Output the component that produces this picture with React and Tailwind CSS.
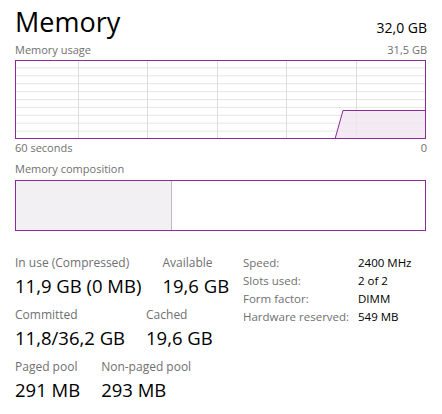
import React from 'react';

const font = { fontFamily: '"Open Sans", "Noto Sans", sans-serif' };

/* ─── Usage chart ─────────────────────────────────────────── */
const UsageChart = () => {
  const w = 411;
  const h = 79;
  const cols = [63, 132, 202, 271, 341];
  const rows = Array.from({ length: 9 }, (_, i) => ((i + 1) * h) / 10);
  return (
    <svg width={w} height={h} className="block">
      <rect x="0" y="0" width={w} height={h} fill="#ffffff" />
      {rows.map((y) => (
        <line key={y} x1="0" x2={w} y1={y} y2={y} stroke="#e6e6e6" strokeWidth="1" />
      ))}
      {cols.map((x) => (
        <line key={x} x1={x + 0.5} x2={x + 0.5} y1="0" y2={h} stroke="#dcdcdc" strokeWidth="1" />
      ))}
      <polygon points={`320,${h} 328,50 ${w},50 ${w},${h}`} fill="#f1e6f2" fillOpacity="0.85" />
      <polyline points={`320,${h} 328,50.5 ${w},50.5`} fill="none" stroke="#8b2a99" strokeWidth="1" />
      <rect x="0.5" y="0.5" width={w - 1} height={h - 1} fill="none" stroke="#8b2a99" strokeWidth="1" />
    </svg>
  );
};

const Stat = ({ label, value }) => (
  <div className="flex flex-col">
    <span className="text-[12px] leading-[16px] text-[#707070]">{label}</span>
    <span className="text-[18.5px] leading-[29px] text-black">{value}</span>
  </div>
);

const Spec = ({ label, value }) => (
  <div className="flex h-[18px] items-center text-[11.5px]">
    <span className="w-[115px] text-[#707070]">{label}</span>
    <span className="text-black">{value}</span>
  </div>
);

export default function App() {
  return (
    <div className="w-[442px] h-[414px] bg-white px-[15px] pt-[3px] overflow-hidden" style={font}>
      {/* Header */}
      <div className="flex items-end justify-between">
        <h1 className="text-[27px] leading-[38px] font-normal text-black">Memory</h1>
        <span className="text-[14px] leading-[20px] mb-[3px] text-black">32,0 GB</span>
      </div>
      <div className="flex justify-between text-[11px] leading-[16px] text-[#707070] mt-[1px]">
        <span>Memory usage</span>
        <span>31,5 GB</span>
      </div>

      <div className="mt-[2px]">
        <UsageChart />
      </div>

      <div className="flex justify-between text-[11px] leading-[16px] text-[#707070] mt-[1px]">
        <span>60 seconds</span>
        <span>0</span>
      </div>

      <div className="mt-[5px] text-[11px] leading-[16px] text-[#707070]">Memory composition</div>
      <div className="mt-[3px] flex h-[51px] w-[411px] border border-[#8b2a99]">
        <div className="w-[156px] bg-[#f3f0f4] border-r border-[#bdbdbd]" />
        <div className="flex-1 bg-white" />
      </div>

      {/* Stats */}
      <div className="mt-[24px] flex">
        <div className="flex flex-col w-[228px] gap-[7px]">
          <div className="flex gap-[21px]">
            <Stat label="In use (Compressed)" value="11,9 GB (0 MB)" />
            <Stat label="Available" value="19,6 GB" />
          </div>
          <div className="flex gap-[21px]">
            <Stat label="Committed" value="11,8/36,2 GB" />
            <Stat label="Cached" value="19,6 GB" />
          </div>
          <div className="flex gap-[21px]">
            <Stat label="Paged pool" value="291 MB" />
            <Stat label="Non-paged pool" value="293 MB" />
          </div>
        </div>
        <div className="flex flex-col -mt-[1px]">
          <Spec label="Speed:" value="2400 MHz" />
          <Spec label="Slots used:" value="2 of 2" />
          <Spec label="Form factor:" value="DIMM" />
          <Spec label="Hardware reserved:" value="549 MB" />
        </div>
      </div>
    </div>
  );
}
